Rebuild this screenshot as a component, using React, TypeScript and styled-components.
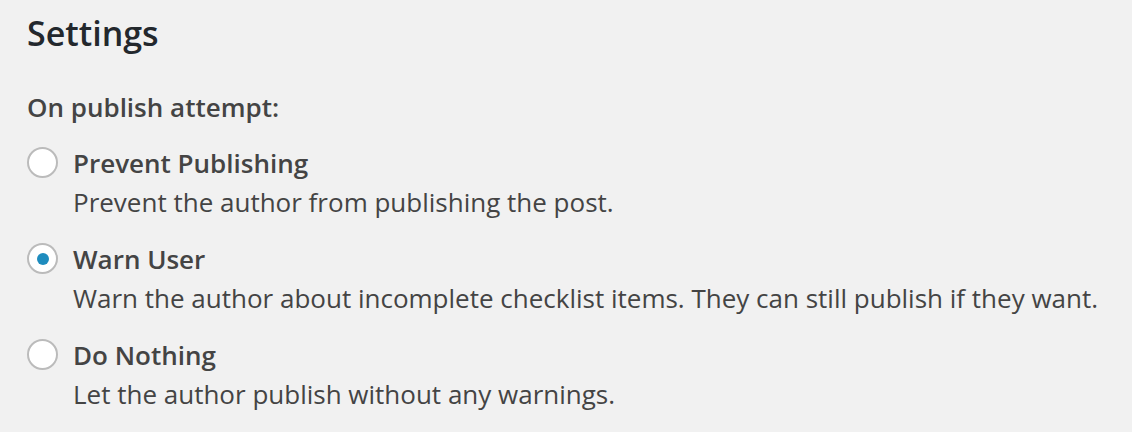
import React, { useState } from "react";
import styled, { createGlobalStyle } from "styled-components";

const GlobalStyle = createGlobalStyle`
  html, body {
    margin: 0;
    padding: 0;
    background: #f1f1f1;
  }
  body {
    font-family: "Open Sans", "Noto Sans", sans-serif;
    color: #444;
  }
`;

const Panel = styled.div`
  width: 1132px;
  height: 432px;
  box-sizing: border-box;
  padding: 11px 27px 0;
  background: #f1f1f1;
`;

const Title = styled.h2`
  margin: 0;
  font-size: 34px;
  line-height: 44px;
  font-weight: 600;
  color: #23282d;
`;

const GroupLabel = styled.p`
  margin: 34px 0 19px;
  font-size: 26px;
  line-height: 36px;
  font-weight: 600;
  color: #444;
`;

const OptionList = styled.div`
  display: flex;
  flex-direction: column;
  gap: 19px;
`;

const Option = styled.label`
  display: flex;
  align-items: flex-start;
  gap: 15px;
  cursor: pointer;
`;

const Radio = styled.span<{ $checked: boolean }>`
  flex: none;
  width: 31px;
  height: 31px;
  box-sizing: border-box;
  margin-top: 3px;
  border-radius: 50%;
  border: 2px solid #bbbbbb;
  background: #fff;
  display: flex;
  align-items: center;
  justify-content: center;

  &::after {
    content: "";
    width: 12px;
    height: 12px;
    border-radius: 50%;
    background: #1e8cbe;
    display: ${(p) => (p.$checked ? "block" : "none")};
  }
`;

const OptionText = styled.div`
  display: flex;
  flex-direction: column;
`;

const OptionName = styled.span`
  font-size: 26px;
  line-height: 39px;
  font-weight: 600;
  color: #444;
`;

const OptionDesc = styled.span`
  font-size: 26px;
  line-height: 38px;
  color: #444;
`;

const options = [
  {
    id: "prevent",
    name: "Prevent Publishing",
    desc: "Prevent the author from publishing the post.",
  },
  {
    id: "warn",
    name: "Warn User",
    desc: "Warn the author about incomplete checklist items. They can still publish if they want.",
  },
  {
    id: "nothing",
    name: "Do Nothing",
    desc: "Let the author publish without any warnings.",
  },
];

export default function App() {
  const [selected, setSelected] = useState("warn");

  return (
    <>
      <GlobalStyle />
      <Panel>
        <Title>Settings</Title>
        <GroupLabel>On publish attempt:</GroupLabel>
        <OptionList>
          {options.map((opt) => (
            <Option key={opt.id} onClick={() => setSelected(opt.id)}>
              <Radio $checked={selected === opt.id} />
              <OptionText>
                <OptionName>{opt.name}</OptionName>
                <OptionDesc>{opt.desc}</OptionDesc>
              </OptionText>
            </Option>
          ))}
        </OptionList>
      </Panel>
    </>
  );
}
